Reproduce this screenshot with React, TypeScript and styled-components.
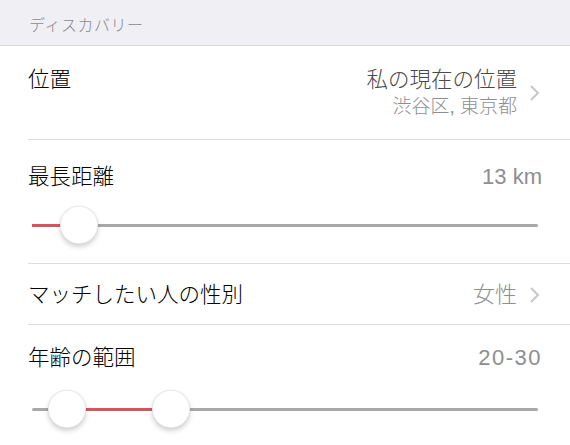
import styled, { createGlobalStyle } from "styled-components";

const GlobalStyle = createGlobalStyle`
  html, body {
    margin: 0;
    padding: 0;
    background: #ffffff;
  }
  body {
    font-family: "Liberation Sans", "Noto Sans CJK JP", sans-serif;
    -webkit-font-smoothing: antialiased;
  }
`;

function Chevron() {
  return (
    <ChevronIcon width="10" height="16" viewBox="0 0 10 16">
      <polyline points="1.5,1.5 8,8 1.5,14.5" fill="none" stroke="#c7c7cc" strokeWidth="2" strokeLinecap="round" strokeLinejoin="round" />
    </ChevronIcon>
  );
}

interface SliderProps {
  from?: number;
  to: number;
}

function Slider({ from, to }: SliderProps) {
  const start = from ?? 0;
  return (
    <SliderTrack>
      <TrackFill $start={start} $end={to} />
      {from !== undefined && <Thumb $pos={from} />}
      <Thumb $pos={to} />
    </SliderTrack>
  );
}

function App() {
  return (
    <>
      <GlobalStyle />
      <Page>
        <SectionHeader>ディスカバリー</SectionHeader>
        <List>
          <Row $pad="20px 28px 20px">
            <LocationLine>
              <Label>位置</Label>
              <Accessory>
                <ValueStack>
                  <MainValue>私の現在の位置</MainValue>
                  <SubValue>渋谷区, 東京都</SubValue>
                </ValueStack>
                <Chevron />
              </Accessory>
            </LocationLine>
          </Row>
          <Row $pad="23px 28px 19px">
            <Line>
              <Label>最長距離</Label>
              <Value>13 km</Value>
            </Line>
            <SliderArea $top={14}>
              <Slider to={9.3} />
            </SliderArea>
          </Row>
          <Row $pad="17px 28px 16px">
            <Line>
              <Label>マッチしたい人の性別</Label>
              <Accessory>
                <Value>女性</Value>
                <Chevron />
              </Accessory>
            </Line>
          </Row>
          <Row $pad="19px 28px 16px" $last>
            <Line>
              <Label>年齢の範囲</Label>
              <Value $spaced>20-30</Value>
            </Line>
            <SliderArea $top={17}>
              <Slider from={6.9} to={27.5} />
            </SliderArea>
          </Row>
        </List>
      </Page>
    </>
  );
}

const Page = styled.div`
  width: 570px;
  min-height: 445px;
  background: #ffffff;
`;

const SectionHeader = styled.div`
  height: 46px;
  padding: 12px 29px 0;
  box-sizing: border-box;
  background: #efeff4;
  border-bottom: 1px solid #d9d9de;
  color: #8a8a8f;
  font-size: 16px;
  font-weight: 300;
  line-height: 28px;
  letter-spacing: 0.5px;
`;

const List = styled.div`
  display: flex;
  flex-direction: column;
`;

const Row = styled.div<{ $pad: string; $last?: boolean }>`
  position: relative;
  padding: ${({ $pad }) => $pad};
  &::after {
    content: "";
    display: ${({ $last }) => ($last ? "none" : "block")};
    position: absolute;
    left: 28px;
    right: 0;
    bottom: 0;
    height: 1px;
    background: #dededf;
  }
`;

const Line = styled.div`
  display: flex;
  align-items: center;
  justify-content: space-between;
  height: 28px;
`;

const LocationLine = styled.div`
  display: flex;
  align-items: flex-start;
  justify-content: space-between;
`;

const Label = styled.span`
  font-size: 21.5px;
  font-weight: 300;
  line-height: 28px;
  color: #000000;
`;

const Value = styled.span<{ $spaced?: boolean }>`
  font-size: 22px;
  font-weight: 300;
  line-height: 28px;
  letter-spacing: ${({ $spaced }) => ($spaced ? "1.5px" : "0")};
  color: #8e8e93;
`;

const Accessory = styled.div`
  display: flex;
  align-items: center;
  gap: 13px;
  margin-right: 2px;
`;

const ValueStack = styled.div`
  display: flex;
  flex-direction: column;
  align-items: flex-end;
`;

const MainValue = styled.span`
  font-size: 21.5px;
  font-weight: 300;
  line-height: 28px;
  color: #4a4a4a;
`;

const SubValue = styled.span`
  font-size: 19px;
  font-weight: 300;
  line-height: 26px;
  color: #8e8e93;
`;

const ChevronIcon = styled.svg`
  display: block;
  flex-shrink: 0;
`;

const SliderArea = styled.div<{ $top: number }>`
  margin: ${({ $top }) => $top}px 4px 0;
  height: 40px;
  display: flex;
  align-items: center;
`;

const SliderTrack = styled.div`
  position: relative;
  flex: 1;
  height: 3px;
  border-radius: 2px;
  background: #a9a9ab;
`;

const TrackFill = styled.div<{ $start: number; $end: number }>`
  position: absolute;
  top: 0;
  bottom: 0;
  left: ${({ $start }) => $start}%;
  width: ${({ $start, $end }) => $end - $start}%;
  background: #e0505c;
`;

const Thumb = styled.div<{ $pos: number }>`
  position: absolute;
  top: 50%;
  left: ${({ $pos }) => $pos}%;
  width: 38px;
  height: 38px;
  margin: -19px 0 0 -19px;
  border-radius: 50%;
  background: #ffffff;
  box-sizing: border-box;
  border: 0.5px solid rgba(0, 0, 0, 0.06);
  box-shadow: 0 3px 5px rgba(0, 0, 0, 0.18), 0 0 1px rgba(0, 0, 0, 0.15);
`;

export default App;
